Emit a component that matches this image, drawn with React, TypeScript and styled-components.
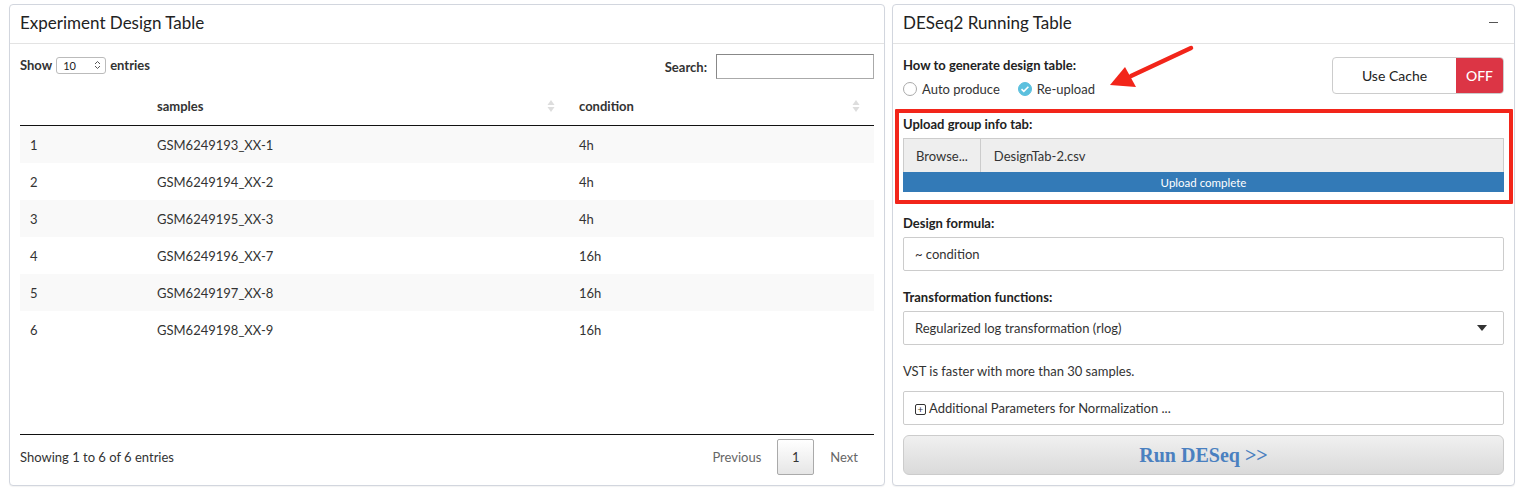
import * as React from "react";
import styled, { createGlobalStyle } from "styled-components";

const GlobalStyle = createGlobalStyle`
  body {
    margin: 0;
    background: #fff;
    color: #333;
    font-family: "Source Sans Pro", Lato, "Noto Sans", sans-serif;
    font-size: 13px;
  }
`;

const Page = styled.div`
  position: relative;
  display: grid;
  grid-template-columns: 876px 623px;
  gap: 7px;
  padding: 4px 9px;
  height: 482px;
`;

const Panel = styled.section`
  display: flex;
  flex-direction: column;
  border: 1px solid #d2d6de;
  border-radius: 4px;
  background: #fff;
  box-shadow: 0 1px 1px rgba(0, 0, 0, 0.05);
  overflow: hidden;
`;

const PanelHeader = styled.header`
  display: flex;
  align-items: center;
  justify-content: space-between;
  height: 39px;
  box-sizing: border-box;
  padding: 0 10px 3px;
  border-bottom: 1px solid #e3e3e3;
  font-size: 17px;
  color: #222;
`;

const Collapse = styled.span`
  width: 9px;
  height: 1px;
  background: #555;
  margin-right: 6px;
`;

const LeftBody = styled.div`
  flex: 1;
  display: flex;
  flex-direction: column;
  padding: 10px 10px 0;
`;

const Controls = styled.div`
  display: flex;
  align-items: center;
  justify-content: space-between;
  height: 25px;
  font-weight: 700;
  font-size: 13px;
`;

const Inline = styled.label<{ $lift?: boolean }>`
  display: flex;
  align-items: center;
  gap: 4px;
  padding-bottom: ${(p) => (p.$lift ? "3px" : "0")};
`;

const LengthSelect = styled.span`
  display: inline-flex;
  align-items: center;
  justify-content: space-between;
  width: 50px;
  height: 17px;
  box-sizing: border-box;
  padding: 0 4px 0 6px;
  border: 1px solid #bbb;
  border-radius: 3px;
  font-weight: 400;
  font-size: 11px;
  color: #222;
`;

const SearchBox = styled.span`
  display: inline-block;
  width: 158px;
  height: 25px;
  box-sizing: border-box;
  margin-left: 5px;
  border: 1px solid #aaa;
  border-left-color: #888;
  border-top-color: #888;
`;

const TableArea = styled.div`
  flex: 1;
  margin-top: 8px;
  border-bottom: 1px solid #111;
`;

const Table = styled.table`
  width: 100%;
  border-collapse: collapse;
  table-layout: fixed;
  font-size: 13px;
`;

const Th = styled.th<{ $w?: number }>`
  position: relative;
  height: 37px;
  padding: 0 10px 1px;
  text-align: left;
  font-weight: 700;
  border-bottom: 1px solid #111;
  width: ${(p) => (p.$w ? `${p.$w}px` : "auto")};
`;

const SortIcon = styled.svg`
  position: absolute;
  right: 14px;
  top: 12px;
`;

const Tr = styled.tr<{ $odd: boolean }>`
  background: ${(p) => (p.$odd ? "#f9f9f9" : "#fff")};
  & + & td {
    border-top: 1px solid #ddd;
  }
`;

const Td = styled.td`
  height: 37px;
  box-sizing: border-box;
  padding: 2px 10px 0;
  color: #333;
`;

const Footer = styled.div`
  display: flex;
  align-items: flex-start;
  justify-content: space-between;
  height: 50px;
  box-sizing: border-box;
  padding-top: 4px;
`;

const InfoText = styled.span`
  line-height: 36px;
`;

const Pager = styled.div`
  display: flex;
  align-items: center;
`;

const PageLink = styled.span<{ $current?: boolean }>`
  display: inline-flex;
  align-items: center;
  justify-content: center;
  height: 36px;
  box-sizing: border-box;
  padding: 0 ${(p) => (p.$current ? "0" : "16px")};
  width: ${(p) => (p.$current ? "37px" : "auto")};
  color: #666;
  font-size: 13px;
  ${(p) =>
    p.$current &&
    `
    color: #333;
    border: 1px solid #aaa;
    border-radius: 2px;
    background: linear-gradient(#fff, #e6e6e6);
  `}
`;

const RightBody = styled.div`
  flex: 1;
  display: flex;
  flex-direction: column;
  padding: 10px 10px 0;
`;

const TopRow = styled.div`
  display: flex;
  justify-content: space-between;
  align-items: flex-start;
  height: 43px;
`;

const Label = styled.div`
  font-weight: 700;
  font-size: 13px;
  line-height: 20px;
  padding-top: 1px;
  color: #222;
  margin-bottom: 4px;
`;

const Radios = styled.div`
  display: flex;
  gap: 18px;
  font-size: 13px;
  line-height: 18px;
  padding-top: 1px;
`;

const Radio = styled.span<{ $on?: boolean }>`
  display: inline-flex;
  align-items: center;
  gap: 5px;
  &::before {
    content: "";
    width: 14px;
    height: 14px;
    box-sizing: border-box;
    border-radius: 50%;
    border: 1px solid ${(p) => (p.$on ? "#5bc0de" : "#aaa")};
    background: ${(p) =>
      p.$on
        ? `#5bc0de url("data:image/svg+xml,%3Csvg xmlns='http://www.w3.org/2000/svg' viewBox='0 0 14 14'%3E%3Cpath d='M3.5 7.2l2.3 2.2 4.6-4.6' fill='none' stroke='white' stroke-width='1.6'/%3E%3C/svg%3E") center/14px no-repeat`
        : "#fff"};
  }
`;

const Toggle = styled.div`
  display: flex;
  width: 172px;
  height: 37px;
  box-sizing: border-box;
  margin-top: 3px;
  border: 1px solid #ccc;
  border-radius: 4px;
  overflow: hidden;
  font-size: 14px;
`;

const ToggleLabel = styled.span`
  flex: 1;
  display: flex;
  align-items: center;
  justify-content: center;
  color: #222;
`;

const ToggleOff = styled.span`
  width: 47px;
  display: flex;
  align-items: center;
  justify-content: center;
  background: #dc3545;
  color: #fff;
  font-weight: 500;
`;

const Highlight = styled.div`
  margin: 12px -9px 0 -8px;
  padding: 0 5px 8px 4px;
  border: 4px solid #f2251a;
  border-radius: 1px;
`;

const FileRow = styled.div`
  display: flex;
  height: 34px;
  box-sizing: border-box;
  border: 1px solid #ccc;
  border-bottom: none;
  background: #eee;
  font-size: 13px;
  color: #333;
`;

const BrowseBtn = styled.span`
  display: flex;
  align-items: center;
  padding: 0 12px;
  border-right: 1px solid #ccc;
`;

const FileName = styled.span`
  display: flex;
  align-items: center;
  padding: 0 13px;
`;

const Progress = styled.div`
  height: 20px;
  display: flex;
  align-items: center;
  justify-content: center;
  background: #337ab7;
  color: #fff;
  font-size: 11.5px;
`;

const Group = styled.div<{ $top: number }>`
  margin-top: ${(p) => p.$top}px;
`;

const Field = styled.div`
  display: flex;
  align-items: center;
  justify-content: space-between;
  height: 34px;
  box-sizing: border-box;
  padding: 0 11px;
  border: 1px solid #ccc;
  border-radius: 2px;
  font-size: 13px;
  color: #333;
`;

const Help = styled.div`
  margin-top: 15px;
  padding-top: 1px;
  font-size: 13px;
  line-height: 20px;
`;

const Caret = styled.span`
  width: 0;
  height: 0;
  border-left: 5px solid transparent;
  border-right: 5px solid transparent;
  border-top: 6px solid #333;
  margin-right: 5px;
`;

const PlusBox = styled.span`
  display: inline-flex;
  align-items: center;
  justify-content: center;
  width: 9px;
  height: 9px;
  margin-right: 3px;
  border: 1px solid #333;
  border-radius: 2px;
  font-size: 10px;
  line-height: 1;
`;

const RunButton = styled.div`
  margin-top: 10px;
  height: 40px;
  box-sizing: border-box;
  display: flex;
  align-items: center;
  justify-content: center;
  border: 1px solid #ccc;
  border-radius: 6px;
  background: linear-gradient(#f0f0f0, #dadada);
  font-family: "Liberation Serif", "DejaVu Serif", serif;
  font-weight: 700;
  font-size: 20px;
  color: #4a80c0;
`;

const Arrow = styled.svg`
  position: absolute;
  left: 1105px;
  top: 42px;
  pointer-events: none;
`;

const rows = [
  ["1", "GSM6249193_XX-1", "4h"],
  ["2", "GSM6249194_XX-2", "4h"],
  ["3", "GSM6249195_XX-3", "4h"],
  ["4", "GSM6249196_XX-7", "16h"],
  ["5", "GSM6249197_XX-8", "16h"],
  ["6", "GSM6249198_XX-9", "16h"],
];

const Sort = () => (
  <SortIcon width="8" height="14" viewBox="0 0 8 14">
    <path d="M4 1 L7.5 6 H0.5 Z" fill="#ddd" />
    <path d="M4 13 L7.5 8 H0.5 Z" fill="#ddd" />
  </SortIcon>
);

export default function App() {
  return (
    <>
      <GlobalStyle />
      <Page>
        <Panel>
          <PanelHeader>Experiment Design Table</PanelHeader>
          <LeftBody>
            <Controls>
              <Inline $lift>
                Show
                <LengthSelect>
                  10
                  <svg width="7" height="10" viewBox="0 0 7 10">
                    <path d="M1 4 L3.5 1.5 L6 4 M1 6 L3.5 8.5 L6 6" fill="none" stroke="#555" strokeWidth="1" />
                  </svg>
                </LengthSelect>
                entries
              </Inline>
              <Inline>
                Search:
                <SearchBox />
              </Inline>
            </Controls>
            <TableArea>
              <Table>
                <thead>
                  <tr>
                    <Th $w={107}></Th>
                    <Th $w={402}>
                      samples
                      <Sort />
                    </Th>
                    <Th>
                      condition
                      <Sort />
                    </Th>
                  </tr>
                </thead>
                <tbody>
                  {rows.map((r, i) => (
                    <Tr key={r[0]} $odd={i % 2 === 0}>
                      <Td>{r[0]}</Td>
                      <Td>{r[1]}</Td>
                      <Td>{r[2]}</Td>
                    </Tr>
                  ))}
                </tbody>
              </Table>
            </TableArea>
            <Footer>
              <InfoText>Showing 1 to 6 of 6 entries</InfoText>
              <Pager>
                <PageLink>Previous</PageLink>
                <PageLink $current>1</PageLink>
                <PageLink>Next</PageLink>
              </Pager>
            </Footer>
          </LeftBody>
        </Panel>

        <Panel>
          <PanelHeader>
            DESeq2 Running Table
            <Collapse />
          </PanelHeader>
          <RightBody>
            <TopRow>
              <div>
                <Label>How to generate design table:</Label>
                <Radios>
                  <Radio>Auto produce</Radio>
                  <Radio $on>Re-upload</Radio>
                </Radios>
              </div>
              <Toggle>
                <ToggleLabel>Use Cache</ToggleLabel>
                <ToggleOff>OFF</ToggleOff>
              </Toggle>
            </TopRow>

            <Highlight>
              <Label>Upload group info tab:</Label>
              <FileRow>
                <BrowseBtn>Browse...</BrowseBtn>
                <FileName>DesignTab-2.csv</FileName>
              </FileRow>
              <Progress>Upload complete</Progress>
            </Highlight>

            <Group $top={8}>
              <Label>Design formula:</Label>
              <Field>~ condition</Field>
            </Group>

            <Group $top={15}>
              <Label>Transformation functions:</Label>
              <Field>
                Regularized log transformation (rlog)
                <Caret />
              </Field>
            </Group>

            <Help>VST is faster with more than 30 samples.</Help>

            <Group $top={10}>
              <Field>
                <span>
                  <PlusBox>+</PlusBox>Additional Parameters for Normalization ...
                </span>
              </Field>
            </Group>

            <RunButton>Run DESeq &gt;&gt;</RunButton>
          </RightBody>
        </Panel>

        <Arrow width="95" height="52" viewBox="0 0 95 52">
          <line x1="86" y1="6" x2="26" y2="34" stroke="#f2251a" strokeWidth="4.5" strokeLinecap="round" />
          <path d="M5 43 L20 25 L31 45 Z" fill="#f2251a" />
        </Arrow>
      </Page>
    </>
  );
}
